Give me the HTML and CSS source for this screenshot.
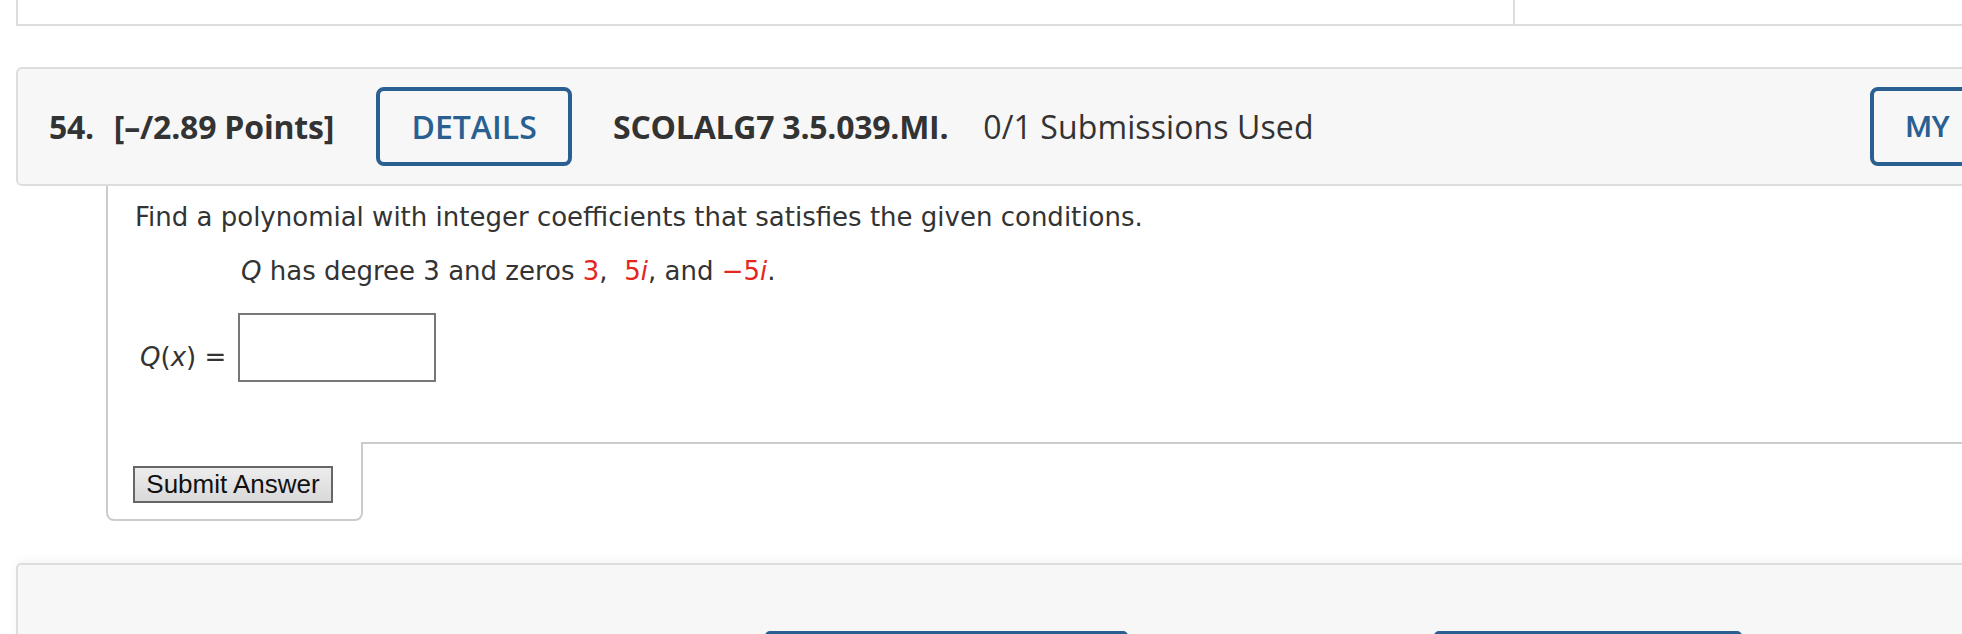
FILE: index.html
```
<!DOCTYPE html>
<html lang="en">
<head>
<meta charset="utf-8">
<title>Question 54</title>
<link rel="stylesheet" href="styles.css">
</head>
<body>
<div class="page">
  <div class="prev-box">
    <div class="prev-main"></div>
    <div class="prev-side"></div>
  </div>

  <div class="q-header">
    <span class="q-num">54.</span>
    <span class="q-points">[–/2.89 Points]</span>
    <button class="btn-outline btn-details">DETAILS</button>
    <span class="q-code">SCOLALG7 3.5.039.MI.</span>
    <span class="q-subs">0/1 Submissions Used</span>
    <button class="btn-outline btn-my">MY</button>
  </div>

  <div class="q-body">
    <div class="q-main">
      <p class="q-text">Find a polynomial with integer coefficients that satisfies the given conditions.</p>
      <p class="q-cond"><i>Q</i> has degree 3 and zeros <span class="red">3</span>,&nbsp; <span class="red">5<i>i</i></span>, and <span class="red">−5<i>i</i></span>.</p>
      <div class="answer-row">
        <span class="answer-label"><i>Q</i>(<i>x</i>) =</span>
        <input class="answer-input" type="text" aria-label="Q(x)">
      </div>
    </div>
    <div class="q-footer">
      <div class="q-tab">
        <button class="btn-submit">Submit Answer</button>
      </div>
      <div class="q-filler"></div>
    </div>
  </div>

  <div class="next-box">
    <div class="next-btn next-btn-a"></div>
    <div class="next-btn next-btn-b"></div>
  </div>
</div>
</body>
</html>
```

FILE: styles.css
```
html, body {
  margin: 0;
  padding: 0;
  background: #ffffff;
  overflow: hidden;
}

.page {
  width: 2100px;
  padding-left: 16px;
  color: #333333;
}

/* previous question box (cut off at top) */
.prev-box {
  display: flex;
  height: 24px;
  border-left: 2px solid #dddddd;
  border-bottom: 2px solid #dddddd;
}
.prev-main {
  width: 1495px;
  border-right: 2px solid #dddddd;
}
.prev-side {
  flex: 1;
}

/* question header */
.q-header {
  margin-top: 41px;
  height: 115px;
  display: flex;
  align-items: center;
  padding-left: 31px;
  background: #f7f7f7;
  border: 2px solid #dddddd;
  border-radius: 6px;
  font-family: "Open Sans", "Liberation Sans", sans-serif;
  font-size: 32px;
  color: #333333;
}
.q-num {
  font-weight: 700;
  letter-spacing: -0.3px;
}
.q-points {
  font-weight: 700;
  letter-spacing: -0.2px;
  margin-left: 20px;
}
.q-code {
  font-weight: 700;
  letter-spacing: -0.25px;
  margin-left: 41px;
}
.q-subs {
  font-weight: 400;
  margin-left: 35px;
  letter-spacing: 0.1px;
}

.btn-outline {
  box-sizing: border-box;
  height: 79px;
  background: transparent;
  border: 4px solid #2a5f91;
  border-radius: 8px;
  color: #2a5f91;
  font-family: "Open Sans", "Liberation Sans", sans-serif;
  font-weight: 600;
  font-size: 32px;
  padding: 0;
  cursor: pointer;
}
.btn-details {
  width: 196px;
  margin-left: 42px;
}
.btn-my {
  margin-left: 556px;
  width: 200px;
  text-align: left;
  padding-left: 32px;
  font-family: Roboto, "Liberation Sans", sans-serif;
  font-weight: 500;
  font-size: 30px;
}

/* question body */
.q-body {
  margin-left: 90px;
  font-family: "DejaVu Sans", Verdana, sans-serif;
  font-size: 26px;
  color: #333333;
}
.q-main {
  border-left: 2px solid #cccccc;
  padding: 13px 0 60px 27px;
}
.q-text {
  margin: 0;
  line-height: 36px;
}
.q-cond {
  margin: 18px 0 0 106px;
  line-height: 36px;
}
.red {
  color: #e5261d;
}
.answer-row {
  display: flex;
  align-items: flex-end;
  margin: 24px 0 0 5px;
}
.answer-label {
  line-height: 36px;
  margin-bottom: 7px;
  margin-right: 12px;
}
.answer-input {
  box-sizing: border-box;
  width: 198px;
  height: 69px;
  border: 2px solid #777777;
  margin: 0;
  padding: 0 8px;
  background: #ffffff;
  font-size: 24px;
}

.q-footer {
  display: flex;
  align-items: flex-start;
}
.q-tab {
  box-sizing: border-box;
  width: 257px;
  padding: 24px 0 16px 25px;
  border-left: 2px solid #cccccc;
  border-right: 2px solid #cccccc;
  border-bottom: 2px solid #cccccc;
  border-radius: 0 0 8px 8px;
}
.q-filler {
  flex: 1;
  border-top: 2px solid #cccccc;
}
.btn-submit {
  display: block;
  box-sizing: border-box;
  width: 200px;
  height: 37px;
  margin: 0;
  padding: 0;
  border: 2px solid #666666;
  background: linear-gradient(#ededed, #d9d9d9);
  font-family: "Liberation Sans", Arial, sans-serif;
  font-size: 26px;
  line-height: 33px;
  color: #111111;
  cursor: pointer;
}

/* next question box (cut off at bottom) */
.next-box {
  margin-top: 42px;
  height: 200px;
  display: flex;
  align-items: flex-start;
  padding: 66px 0 0 747px;
  background: #f7f7f7;
  border: 2px solid #dddddd;
  border-radius: 5px;
  box-shadow: 0 -3px 8px rgba(0, 0, 0, 0.04);
}
.next-btn {
  height: 80px;
  background: #2a5f91;
  border-radius: 5px;
}
.next-btn-a {
  width: 363px;
}
.next-btn-b {
  width: 308px;
  margin-left: 306px;
}
```
